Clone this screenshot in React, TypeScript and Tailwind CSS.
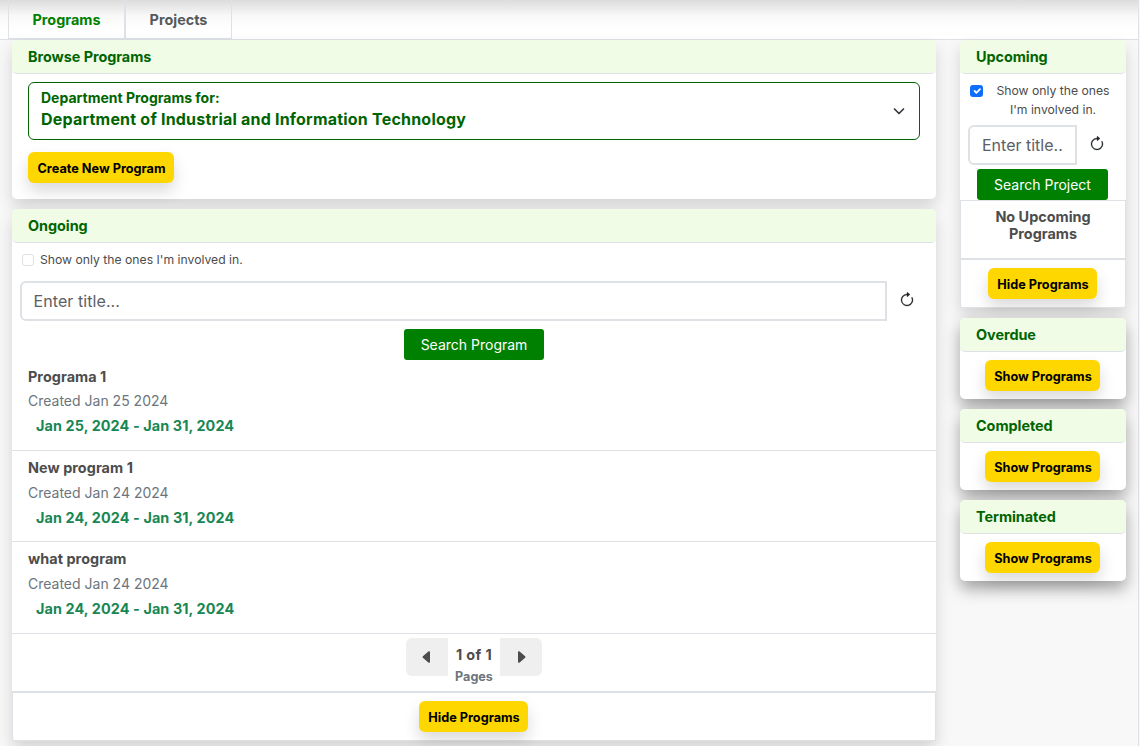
import React from "react";
import { BsArrowClockwise, BsCaretLeftFill, BsCaretRightFill } from "react-icons/bs";

function YellowButton({ children, className }: { children: React.ReactNode; className: string }) {
  return (
    <button
      className={`h-[31px] shrink-0 whitespace-nowrap rounded-[6px] bg-[#ffd700] pl-px pt-[2px] text-center text-[12.7px] font-bold leading-[19px] text-black shadow-[0_8px_16px_rgba(0,0,0,0.15)] ${className}`}
    >
      {children}
    </button>
  );
}

function CardHeader({ children }: { children: React.ReactNode }) {
  return (
    <div className="h-[34px] shrink-0 rounded-[5px] border-b border-[#dee2e6] bg-[#f0fce5] pl-4 text-[14.4px] font-bold leading-[34px] tracking-[-0.04px] text-[#006400]">
      {children}
    </div>
  );
}

function CollapsedCard({ title }: { title: string }) {
  return (
    <section className="flex h-[81px] shrink-0 flex-col rounded-[5px] bg-white shadow-[0_8px_16px_rgba(0,0,0,0.35)]">
      <CardHeader>{title}</CardHeader>
      <div className="flex justify-center pr-px pt-2">
        <YellowButton className="w-[115px]">Show Programs</YellowButton>
      </div>
    </section>
  );
}

const programs = [
  { title: "Programa 1", created: "Created Jan 25 2024", range: "Jan 25, 2024 - Jan 31, 2024", spacing: "h-[91px] leading-[24px]" },
  { title: "New program 1", created: "Created Jan 24 2024", range: "Jan 24, 2024 - Jan 31, 2024", spacing: "h-[91px] leading-[25px]" },
  { title: "what program", created: "Created Jan 24 2024", range: "Jan 24, 2024 - Jan 31, 2024", spacing: "h-[92px] leading-[25px]" },
];

export default function App() {
  return (
    <div className="flex h-[746px] w-[1140px] overflow-hidden bg-[#f8f8f8] font-['Inter',sans-serif] text-[#4c4c4c]">
      <div className="flex w-[1139px] flex-col border-r border-[#dee2e6]">
        <nav className="flex h-10 shrink-0 border-b border-[#dee2e6] bg-linear-to-b from-[#dcdcdc] from-0% via-[#f8f8f8] via-40% to-white to-75% pl-2 text-[14.4px] font-bold leading-[40px]">
          <a className="h-[39px] w-[117px] border border-t-0 border-[#dee2e6] text-center text-[#008000]">Programs</a>
          <a className="h-[39px] w-[107px] border border-t-0 border-[#dee2e6] text-center text-[#55595c]">Projects</a>
        </nav>

        <div className="flex gap-6 pl-3">
          <main className="flex w-[924px] flex-col gap-[10px]">
            <section className="h-[159px] shrink-0 rounded-[5px] bg-white shadow-[0_8px_16px_rgba(0,0,0,0.15)]">
              <CardHeader>Browse Programs</CardHeader>
              <div className="px-4 pt-2">
                <div className="flex h-[58px] items-center justify-between rounded-[6px] border border-[#006400] px-3 font-bold text-[#006400]">
                  <div className="pb-1">
                    <div className="text-[14px] leading-[20px]">Department Programs for:</div>
                    <div className="text-[16px] leading-[22px] tracking-[0.21px]">Department of Industrial and Information Technology</div>
                  </div>
                  <svg width="16" height="16" viewBox="0 0 16 16" fill="none" stroke="#343a40" strokeWidth="1.7" strokeLinecap="round" strokeLinejoin="round">
                    <path d="m3.5 6 4.5 4.5 4.5-4.5" />
                  </svg>
                </div>
                <YellowButton className="mt-3 w-[146px]">Create New Program</YellowButton>
              </div>
            </section>

            <section className="flex h-[532px] shrink-0 flex-col rounded-[5px] bg-white shadow-[0_8px_16px_rgba(0,0,0,0.15)]">
              <CardHeader>Ongoing</CardHeader>
              <div className="flex h-[34px] items-center pl-[10px]">
                <span className="h-3 w-3 rounded-[3px] border border-[#dee2e6] bg-white" />
                <span className="pl-[6px] pt-px text-[12.2px]">Show only the ones I'm involved in.</span>
              </div>
              <div className="flex pl-2 pt-[5px]">
                <input
                  placeholder="Enter title..."
                  className="h-10 w-[867px] rounded-l-[6px] border-2 border-[#dee2e6] pl-[11.5px] pr-[11px] text-[16px] tracking-[0.08px] placeholder:text-[#5c6065]"
                />
                <BsArrowClockwise className="ml-3 mt-[11px] stroke-[#212529] stroke-[0.3] text-[#212529]" size={16} />
              </div>
              <button className="mx-auto mt-2 h-[31px] w-[140px] shrink-0 rounded-[3px] bg-[#008000] text-[14px] text-white">
                Search Program
              </button>
              <div>
                {programs.map((p) => (
                  <article key={p.title} className={`border-b border-[#dee2e6] pl-4 pt-[4px] ${p.spacing}`}>
                    <h3 className="text-[14.4px] font-bold leading-[25px] tracking-[0.05px]">{p.title}</h3>
                    <p className="text-[14px] text-[#6c757d]">{p.created}</p>
                    <p className="pl-2 text-[14.4px] font-bold leading-[25px] tracking-[0.1px] text-[#198754]">{p.range}</p>
                  </article>
                ))}
              </div>
              <div className="flex h-[57px] shrink-0 justify-center pt-1">
                <button className="flex h-[38px] w-[42px] items-center justify-center rounded-l-[6px] bg-[#efefef]">
                  <BsCaretLeftFill size={16} className="text-[#4c4c4c]" />
                </button>
                <div className="w-[52px] text-center font-bold">
                  <div className="pt-[6px] text-[14.4px] leading-[22px] tracking-[0.4px]">1 of 1</div>
                  <div className="text-[12.6px] leading-[21px] text-[#6c757d]">Pages</div>
                </div>
                <button className="flex h-[38px] w-[42px] items-center justify-center rounded-r-[6px] bg-[#efefef]">
                  <BsCaretRightFill size={16} className="text-[#4c4c4c]" />
                </button>
              </div>
              <div className="flex h-[50px] shrink-0 justify-center border border-t-2 border-[#dee2e6] pr-px pt-2">
                <YellowButton className="w-[109px]">Hide Programs</YellowButton>
              </div>
            </section>
          </main>

          <aside className="flex w-[166px] flex-col gap-[10px]">
            <section className="flex h-[268px] shrink-0 flex-col rounded-[5px] bg-white shadow-[0_8px_16px_rgba(0,0,0,0.15)]">
              <CardHeader>Upcoming</CardHeader>
              <div className="flex h-[51px] pl-[10px] pt-[7px]">
                <span className="mt-1 flex h-3 w-[13px] shrink-0 items-center justify-center rounded-[3px] bg-[#0d6efd]">
                  <svg width="12" height="12" viewBox="0 0 20 20" fill="none" stroke="white" strokeWidth="3" strokeLinecap="round" strokeLinejoin="round">
                    <path d="m6 10 3 3 6-6" />
                  </svg>
                </span>
                <p className="w-[140px] text-center text-[12.2px] leading-[19px]">
                  Show only the ones
                  <br />
                  I'm involved in.
                </p>
              </div>
              <div className="flex pl-2">
                <input
                  placeholder="Enter title..."
                  className="h-10 w-[109px] rounded-l-[6px] border-2 border-[#dee2e6] px-3 text-[16px] placeholder:text-[#5c6065]"
                />
                <BsArrowClockwise className="ml-3 mt-[11px] stroke-[#212529] stroke-[0.3] text-[#212529]" size={16} />
              </div>
              <button className="ml-[17px] mt-1 h-[31px] w-[131px] shrink-0 rounded-[3px] bg-[#008000] text-[14px] text-white">
                Search Project
              </button>
              <div className="h-[59px] shrink-0 border border-[#dee2e6] pt-[7px] text-center text-[14.4px] font-bold leading-[17px]">
                No Upcoming
                <br />
                Programs
              </div>
              <div className="flex h-[49px] shrink-0 justify-center border border-[#dee2e6] pr-px pt-2">
                <YellowButton className="w-[109px]">Hide Programs</YellowButton>
              </div>
            </section>
            <CollapsedCard title="Overdue" />
            <CollapsedCard title="Completed" />
            <CollapsedCard title="Terminated" />
          </aside>
        </div>
      </div>
    </div>
  );
}
